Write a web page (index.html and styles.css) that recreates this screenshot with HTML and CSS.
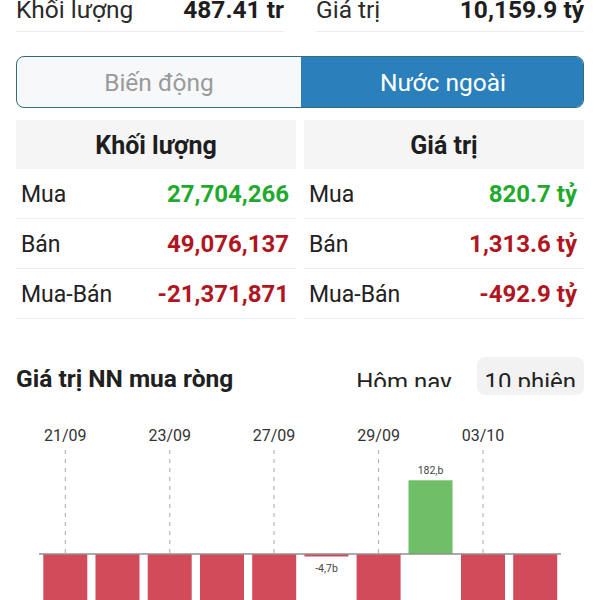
FILE: index.html
```html
<!DOCTYPE html>
<html lang="vi">
<head>
<meta charset="utf-8">
<title>Nước ngoài</title>
<link rel="stylesheet" href="styles.css">
</head>
<body>
<div class="page">
  <div class="summary">
    <div class="sum-item"><span>Khối lượng</span><b>487.41 tr</b></div>
    <div class="sum-item"><span>Giá trị</span><b>10,159.9 tỷ</b></div>
  </div>

  <div class="seg">
    <div class="seg-btn">Biến động</div>
    <div class="seg-btn active">Nước ngoài</div>
  </div>

  <div class="tables">
    <div class="col">
      <div class="head">Khối lượng</div>
      <div class="row"><span>Mua</span><b class="up">27,704,266</b></div>
      <div class="row"><span>Bán</span><b class="down">49,076,137</b></div>
      <div class="row"><span>Mua-Bán</span><b class="down">-21,371,871</b></div>
    </div>
    <div class="col">
      <div class="head">Giá trị</div>
      <div class="row"><span>Mua</span><b class="up">820.7 tỷ</b></div>
      <div class="row"><span>Bán</span><b class="down">1,313.6 tỷ</b></div>
      <div class="row"><span>Mua-Bán</span><b class="down">-492.9 tỷ</b></div>
    </div>
  </div>

  <div class="chart-head">
    <h2 class="chart-title">Giá trị NN mua ròng</h2>
    <div class="tabs">
      <div class="tab"><span class="tab-text">Hôm nay</span></div>
      <div class="tab active"><span class="tab-text">10 phiên</span></div>
    </div>
  </div>

  <svg class="chart" width="600" height="180" viewBox="0 0 600 180" xmlns="http://www.w3.org/2000/svg">
    <g class="dates">
      <text x="65.3" y="21">21/09</text>
      <text x="169.8" y="21">23/09</text>
      <text x="274" y="21">27/09</text>
      <text x="378.6" y="21">29/09</text>
      <text x="483" y="21">03/10</text>
    </g>
    <g class="grid">
      <line x1="65.3" y1="30" x2="65.3" y2="134"/>
      <line x1="169.8" y1="30" x2="169.8" y2="134"/>
      <line x1="274" y1="30" x2="274" y2="134"/>
      <line x1="378.6" y1="30" x2="378.6" y2="134"/>
      <line x1="483" y1="30" x2="483" y2="134"/>
    </g>
    <g class="neg">
      <rect x="43.3" y="134" width="44" height="60"/>
      <rect x="95.5" y="134" width="44" height="60"/>
      <rect x="147.7" y="134" width="44" height="60"/>
      <rect x="200" y="134" width="44" height="60"/>
      <rect x="252.2" y="134" width="44" height="60"/>
      <rect x="304.4" y="134" width="44" height="2.5"/>
      <rect x="356.6" y="134" width="44" height="60"/>
      <rect x="461" y="134" width="44" height="60"/>
      <rect x="513.2" y="134" width="44" height="60"/>
    </g>
    <rect class="pos" x="408.5" y="60.3" width="44" height="73.7"/>
    <line class="axis" x1="39" y1="134" x2="561" y2="134"/>
    <text class="val" x="430.5" y="54">182,b</text>
    <text class="val" x="326.5" y="152">-4,7b</text>
  </svg>
</div>
</body>
</html>
```

FILE: styles.css
```css
* { box-sizing: border-box; }

html, body {
  margin: 0;
  padding: 0;
  background: #ffffff;
  overflow: hidden;
}

body {
  font-family: Roboto, "Noto Sans", "DejaVu Sans", sans-serif;
  color: #202020;
}

.page {
  width: 600px;
  height: 600px;
  padding: 0 16px;
  overflow: hidden;
}

/* top summary */
.summary {
  display: flex;
  gap: 32px;
  margin-top: -12px;
}

.sum-item {
  flex: 1;
  display: flex;
  justify-content: space-between;
  height: 44px;
  line-height: 43px;
  font-size: 24.5px;
  border-bottom: 1px solid #ededed;
}

.sum-item span { color: #2a2a2a; }
.sum-item b { font-weight: 700; color: #1e1e1e; }

/* segmented control */
.seg {
  display: flex;
  margin-top: 24px;
  height: 52px;
  border: 1.5px solid #2f6f7d;
  border-radius: 8px;
  overflow: hidden;
  background: #f7f8f9;
}

.seg-btn {
  flex: 1;
  display: flex;
  align-items: center;
  justify-content: center;
  font-size: 24.5px;
  color: #9a9a9a;
}

.seg-btn.active {
  background: #2b80bb;
  color: #ffffff;
  margin: -2px -2px -2px 0;
}

/* tables */
.tables {
  display: flex;
  gap: 8px;
  margin-top: 12px;
}

.col { flex: 1; }

.head {
  height: 49px;
  background: #f5f5f5;
  display: flex;
  align-items: center;
  justify-content: center;
  font-size: 25px;
  font-weight: 700;
  color: #1e1e1e;
  padding-top: 2px;
}

.row {
  height: 50px;
  display: flex;
  align-items: center;
  justify-content: space-between;
  padding: 1px 7px 0 5px;
  border-bottom: 1px solid #eeeeee;
  font-size: 23px;
}

.row span { color: #222; }
.row b { font-weight: 700; font-size: 24px; }
.up { color: #1faa2e; }
.down { color: #b0161f; }

/* chart header */
.chart-head {
  display: flex;
  align-items: center;
  justify-content: space-between;
  margin-top: 38px;
  height: 38px;
}

.chart-title {
  margin: 4px 0 0;
  font-size: 24.5px;
  font-weight: 700;
  color: #202020;
}

.tabs {
  display: flex;
  gap: 17px;
  margin-right: 0;
}

.tab {
  padding: 11px 8px 8px;
  border-radius: 8px;
}

.tab.active { background: #f2f2f2; }

.tab-text {
  display: block;
  height: 19px;
  overflow: hidden;
  font-size: 24px;
  line-height: 28px;
  color: #222;
}

/* chart */
.chart {
  display: block;
  margin: 25px 0 0 -16px;
}

.dates text {
  font-family: Roboto, sans-serif;
  font-size: 16px;
  fill: #333;
  text-anchor: middle;
}

.grid line {
  stroke: #a8a8a8;
  stroke-width: 1;
  stroke-dasharray: 4 5;
}

.neg rect { fill: #d24b5b; }
.pos { fill: #6fbe68; }

.axis {
  stroke: #8f8f8f;
  stroke-width: 1.5;
}

.val {
  font-family: Roboto, sans-serif;
  font-size: 10.5px;
  fill: #444;
  text-anchor: middle;
}
```
